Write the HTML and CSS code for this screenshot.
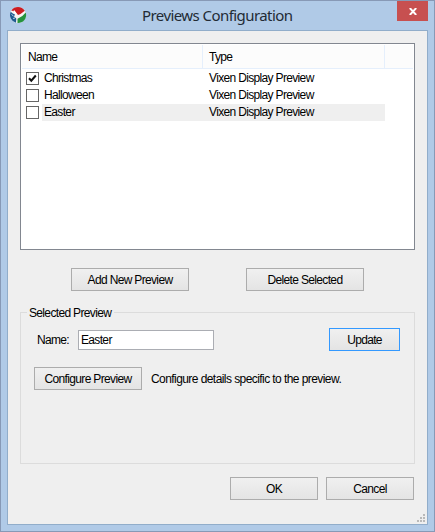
FILE: index.html
```html
<!DOCTYPE html>
<html lang="en">
<head>
<meta charset="utf-8">
<title>Previews Configuration</title>
<link rel="stylesheet" href="styles.css">
</head>
<body>
<div class="window">
  <header class="titlebar">
    <svg class="logo" width="18" height="18" viewBox="0 0 18 18">
      <circle cx="9" cy="9" r="8" fill="#f8f4f3"/>
      <path d="M2.300 4.500A8 8 0 0 1 15.800 4.700L11.500 8L9 9L6.500 5.800Z" fill="#cc1d22"/>
      <path d="M16.700 6.500A8 8 0 0 1 8.500 17L8.500 12.800Q13.500 11 16.700 6.500Z" fill="#25923c"/>
      <path d="M1.700 5.800A8 8 0 0 0 7 16.800L7.300 12.500L5 10.500L6 8.500L3.800 7.500Z" fill="#205c91"/>
      <path d="M2.500 8.500l2 1.500M4 12.500l2-.5" stroke="#dce8f2" stroke-width=".8"/>
      <path d="M5 4.500l2 4" stroke="#fff" stroke-width="1.200"/>
    </svg>
    <h1 class="title">Previews Configuration</h1>
    <button class="close" aria-label="Close"><svg width="8" height="7" viewBox="0 0 8 7"><path d="M.8 0L7.200 7M7.200 0L.8 7" stroke="#fff" stroke-width="1.900"/></svg></button>
  </header>
  <main class="client">
    <div class="list">
      <div class="head"><span class="col-name">Name</span><span class="col-type">Type</span></div>
      <div class="row"><span class="check"><svg width="11" height="11" viewBox="0 0 11 11"><path d="M2 5.200L4.300 7.700L8.800 2.500" fill="none" stroke="#111" stroke-width="2"/></svg></span><span class="cells"><span class="name">Christmas</span><span class="kind">Vixen Display Preview</span></span></div>
      <div class="row"><span class="check"></span><span class="cells"><span class="name">Halloween</span><span class="kind">Vixen Display Preview</span></span></div>
      <div class="row selected"><span class="check"></span><span class="cells"><span class="name">Easter</span><span class="kind">Vixen Display Preview</span></span></div>
    </div>
    <div class="actions">
      <button class="btn wide">Add New Preview</button>
      <button class="btn wide">Delete Selected</button>
    </div>
    <section class="group">
      <div class="legend"><span>Selected Preview</span></div>
      <div class="group-body">
        <div class="field"><label class="label">Name:</label><div class="input">Easter</div><button class="btn update">Update</button></div>
        <div class="configure"><button class="btn config">Configure Preview</button><span class="hint">Configure details specific to the preview.</span></div>
      </div>
    </section>
    <footer class="dialog-actions"><button class="btn">OK</button><button class="btn">Cancel</button></footer>
    <svg class="grip" width="8" height="8" viewBox="0 0 8 8" fill="#b9b9b9"><path d="M6 0h2v2H6zM3 3h2v2H3zM6 3h2v2H6zM0 6h2v2H0zM3 6h2v2H3zM6 6h2v2H6z"/></svg>
  </main>
</div>
</body>
</html>
```
FILE: styles.css
```css
* { box-sizing: border-box; }
body { margin: 0; font: 12px/17px "Liberation Sans", Arial, sans-serif; letter-spacing: -0.66px; color: #000; }
button { font: inherit; letter-spacing: inherit; color: inherit; padding: 0; margin: 0; }
.window { width: 435px; height: 532px; border: 1px solid #8799b6; background: #b0cae7; padding: 0 6px 6px; }
.titlebar { height: 29px; display: flex; position: relative; }
.logo { margin: 5px 0 0 2px; }
.title { margin: 3px 0 0 115px; width: 151px; font: 15px/22px "Noto Sans", "Open Sans", sans-serif; letter-spacing: -0.57px; color: #222a35; white-space: nowrap; }
.close { margin-left: auto; width: 31px; height: 20px; border: 0; background: #c75050; display: flex; align-items: center; justify-content: center; }
.client { height: 495px; border: 1px solid #91adca; background: #efefef; padding: 12px; position: relative; }
.list { height: 207px; width: 395px; border: 1px solid #828790; background: #fff; padding: 1px; }
.head { height: 24px; border-bottom: 1px solid #e5effc; background: #fcfcfc; display: flex; line-height: 25px; }
.col-name { width: 181px; padding-left: 6px; border-right: 1px solid #e5effc; }
.col-type { width: 182px; padding-left: 6px; border-right: 1px solid #e5effc; }
.row { height: 17px; display: flex; padding-left: 4px; }
.head + .row { margin-top: 1px; }
.check { width: 13px; height: 13px; margin: 2px 3px 0 0; border: 1px solid #666; background: #fff; display: flex; }
.cells { width: 343px; display: flex; padding-left: 2px; }
.selected .cells { background: #efefef; }
.name { width: 165px; }
.actions { display: flex; gap: 57px; margin: 18px 0 0 51px; }
.btn { width: 88px; height: 23px; padding-top: 1px; border: 1px solid #acacac; background: linear-gradient(#f0f0f0, #e4e4e4); text-align: center; white-space: nowrap; }
.wide { width: 118px; }
.group { margin-top: 21px; width: 395px; height: 152px; border: 1px solid #dcdcdc; }
.legend { height: 0; }
.legend span { display: block; width: 87px; padding-left: 2px; margin-left: 6px; background: #efefef; position: relative; top: -8px; white-space: nowrap; }
.group-body { padding: 15px 14px 0 13px; }
.field { display: flex; align-items: center; height: 23px; }
.label { width: 44px; padding: 1px 0 0 3px; }
.input { width: 136px; height: 20px; border: 1px solid #abadb3; background: #fff; padding-left: 2px; line-height: 18px; }
.update { width: 71px; margin-left: auto; border-color: #3399ff; }
.configure { display: flex; align-items: center; margin-top: 16px; }
.config { width: 108px; }
.hint { margin-left: 9px; padding-top: 1px; letter-spacing: -0.57px; white-space: nowrap; }
.dialog-actions { display: flex; gap: 8px; justify-content: flex-end; margin: 13px 1px 0 0; }
.grip { position: absolute; right: 2px; bottom: 2px; }
```
